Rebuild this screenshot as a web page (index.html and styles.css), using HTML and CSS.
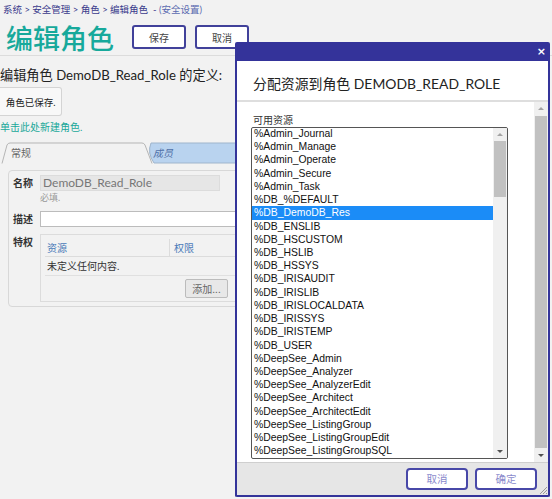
FILE: index.html
```html
<!DOCTYPE html>
<html>
<head>
<meta charset="utf-8">
<link rel="stylesheet" href="styles.css">
</head>
<body>
<div class="page">
  <div class="crumbs">系统 &gt; 安全管理 &gt; 角色 &gt; 编辑角色 &nbsp;- <span class="crumb-light">(安全设置)</span></div>
  <div class="titlebar">
    <h1 class="title">编辑角色</h1>
    <button class="hbtn">保存</button>
    <button class="hbtn">取消</button>
  </div>
  <div class="def">编辑角色 DemoDB_Read_Role 的定义:</div>
  <div class="msg">角色已保存.</div>
  <div class="link">单击此处新建角色.</div>
  <div class="tabs">
    <svg class="tabs-bg" width="240" height="22" viewBox="0 0 240 22">
      <path d="M150,1 L240,1 L240,21 L153,21 Q146,11 150,1 Z" fill="#b9d3ef" stroke="#9fb5cc" stroke-width="1"/>
      <path d="M1,21.5 L6,3 Q7,1 9,1 L141,1 Q143,1 144,3 L151,21.5" fill="#f2f2f2" stroke="#b5b5b5" stroke-width="1"/>
    </svg>
    <span class="tab t1">常规</span>
    <span class="tab t2">成员</span>
  </div>
  <div class="panel">
    <div class="frow">
      <div class="lbl">名称</div>
      <div class="fcol">
        <div class="inp ro">DemoDB_Read_Role</div>
        <div class="hint">必填.</div>
      </div>
    </div>
    <div class="frow r2">
      <div class="lbl">描述</div>
      <div class="fcol"><div class="inp wide"></div></div>
    </div>
    <div class="frow r3">
      <div class="lbl">特权</div>
      <div class="fcol">
        <div class="tbl">
          <div class="thead"><span class="th c1">资源</span><span class="th c2">权限</span></div>
          <div class="trow">未定义任何内容.</div>
          <div class="tbtn"><button class="addbtn">添加...</button></div>
        </div>
      </div>
    </div>
  </div>
</div>

<div class="dialog">
  <div class="dtitlebar"><span class="close">×</span></div>
  <div class="dhead">分配资源到角色 DEMODB_READ_ROLE</div>
  <div class="dbody">
    <div class="dcontent">
      <div class="dlabel">可用资源</div>
      <div class="listbox">
        <div class="items">
          <div class="item">%Admin_Journal</div>
          <div class="item">%Admin_Manage</div>
          <div class="item">%Admin_Operate</div>
          <div class="item">%Admin_Secure</div>
          <div class="item">%Admin_Task</div>
          <div class="item">%DB_%DEFAULT</div>
          <div class="item sel">%DB_DemoDB_Res</div>
          <div class="item">%DB_ENSLIB</div>
          <div class="item">%DB_HSCUSTOM</div>
          <div class="item">%DB_HSLIB</div>
          <div class="item">%DB_HSSYS</div>
          <div class="item">%DB_IRISAUDIT</div>
          <div class="item">%DB_IRISLIB</div>
          <div class="item">%DB_IRISLOCALDATA</div>
          <div class="item">%DB_IRISSYS</div>
          <div class="item">%DB_IRISTEMP</div>
          <div class="item">%DB_USER</div>
          <div class="item">%DeepSee_Admin</div>
          <div class="item">%DeepSee_Analyzer</div>
          <div class="item">%DeepSee_AnalyzerEdit</div>
          <div class="item">%DeepSee_Architect</div>
          <div class="item">%DeepSee_ArchitectEdit</div>
          <div class="item">%DeepSee_ListingGroup</div>
          <div class="item">%DeepSee_ListingGroupEdit</div>
          <div class="item">%DeepSee_ListingGroupSQL</div>
        </div>
        <div class="sbar inner">
          <div class="arr up"></div>
          <div class="track"><div class="thumb ithumb"></div></div>
          <div class="arr down"></div>
        </div>
      </div>
    </div>
    <div class="sbar outer">
      <div class="arr up"></div>
      <div class="track"><div class="thumb othumb"></div></div>
      <div class="arr down"></div>
    </div>
  </div>
  <div class="dfoot">
    <button class="fbtn">取消</button>
    <button class="fbtn">确定</button>
  </div>
  <svg class="grip" width="10" height="10" viewBox="0 0 10 10">
    <path d="M9,2 L2,9 M9,5 L5,9 M9,8 L8,9" stroke="#999" stroke-width="1"/>
  </svg>
</div>
</body>
</html>
```
FILE: styles.css
```css
* { box-sizing: border-box; }
html, body { margin: 0; padding: 0; }
body {
  width: 552px;
  height: 499px;
  overflow: hidden;
  background: #f2f2f2;
  font-family: "Lato", "Noto Sans CJK SC", sans-serif;
  color: #333;
  position: relative;
}
.page { width: 552px; }
.crumbs {
  height: 20px;
  line-height: 20px;
  padding-left: 3px;
  font-size: 9.5px;
  color: #3a3a8c;
}
.crumb-light { color: #5a6ab0; }
.titlebar {
  height: 36px;
  display: flex;
  align-items: center;
  padding-left: 6px;
  border-bottom: 1px solid #dcdcdc;
}
.title {
  margin: 0 18px 0 0;
  font-size: 27px;
  font-weight: 500;
  line-height: 1;
  color: #17a99b;
  font-family: "Noto Sans CJK SC", sans-serif;
}
.hbtn {
  width: 54px;
  height: 24px;
  margin-right: 9px;
  margin-top: -1px;
  background: #fff;
  border: 2px solid #41419a;
  border-radius: 3px;
  font-family: "Noto Sans CJK SC", sans-serif;
  font-size: 10px;
  color: #444;
  padding: 0;
}
.def {
  margin-top: 10px;
  font-size: 13.2px;
  line-height: 18px;
  color: #222;
}
.msg {
  margin-top: 3px;
  width: 62px;
  height: 29px;
  background: #f8f8f8;
  border: 1px solid #d4d4d4;
  border-left: none;
  border-radius: 0 3px 3px 0;
  display: flex;
  align-items: center;
  justify-content: center;
  font-size: 9.5px;
  color: #222;
}
.link {
  margin-top: 4px;
  font-size: 10px;
  line-height: 14px;
  color: #1aa89a;
}
.tabs {
  position: relative;
  margin-top: 8px;
  height: 22px;
  display: flex;
  align-items: center;
  font-size: 10px;
}
.tabs-bg { position: absolute; left: 1px; top: 0; }
.tab { position: relative; line-height: 22px; }
.t1 { margin-left: 11px; color: #666; }
.t2 { margin-left: 122px; color: #5070a8; font-style: italic; }
.panel {
  margin-top: 6px;
  margin-left: 8px;
  width: 260px;
  height: 137px;
  border: 1px solid #d8d8d8;
  border-radius: 4px;
  padding: 4px 0 0 4px;
}
.frow { display: flex; }
.lbl {
  flex: none;
  width: 27px;
  font-size: 10px;
  font-weight: 700;
  line-height: 16px;
  color: #333;
  white-space: nowrap;
}
.fcol { flex: none; width: 240px; }
.inp {
  height: 16px;
  border: 1px solid #dcdcdc;
  font-size: 12px;
  line-height: 14px;
  padding-left: 2px;
  color: #777;
}
.ro { width: 180px; background: #e6e6e6; }
.wide { width: 240px; background: #fff; border-color: #bcbcbc; }
.hint {
  margin-top: 1px;
  font-size: 9px;
  line-height: 12px;
  color: #999;
}
.r2 { margin-top: 7px; }
.r3 { margin-top: 7px; }
.tbl {
  width: 240px;
  height: 68px;
  border: 1px solid #dcdcdc;
  padding: 4px 0 0 4px;
}
.thead {
  display: flex;
  height: 18px;
  border-bottom: 1px solid #dcdcdc;
  font-size: 10px;
  line-height: 18px;
  color: #4a7ab8;
}
.th.c1 { width: 125px; padding-left: 2px; border-right: 1px solid #dcdcdc; }
.th.c2 { padding-left: 4px; }
.trow {
  height: 19px;
  line-height: 19px;
  border-bottom: 1px solid #e0e0e0;
  font-size: 10px;
  padding-left: 2px;
  color: #333;
}
.tbtn { padding-left: 140px; padding-top: 1px; }
.addbtn {
  width: 43px;
  height: 19px;
  padding: 0;
  background: #e8e8e8;
  border: 1px solid #bcbcbc;
  border-radius: 2px;
  font-family: "Noto Sans CJK SC", sans-serif;
  font-size: 10px;
  color: #666;
}

/* dialog */
.dialog {
  position: absolute;
  left: 235px;
  top: 42px;
  width: 315px;
  height: 455px;
  border: 2px solid #34349a;
  border-top: none;
  border-radius: 2px;
  background: #fff;
  display: flex;
  flex-direction: column;
}
.dtitlebar {
  height: 19px;
  background: #34339a;
  display: flex;
  justify-content: flex-end;
  align-items: center;
  padding-right: 2px;
}
.close {
  color: #fff;
  font-family: "DejaVu Sans", sans-serif;
  font-weight: 700;
  font-size: 11px;
  line-height: 1;
}
.dhead {
  height: 41px;
  border-bottom: 2px solid #dedede;
  padding: 14px 0 0 16px;
  font-size: 13.9px;
  line-height: 18px;
  color: #222;
}
.dbody {
  flex: 1;
  display: flex;
  background: #fff;
}
.dcontent { flex: 1; padding: 11px 0 0 14px; }
.dlabel {
  font-size: 10px;
  line-height: 14px;
  color: #333;
  padding-left: 2px;
}
.listbox {
  width: 257px;
  height: 332px;
  border: 1px solid #555;
  border-radius: 2px;
  display: flex;
  overflow: hidden;
  background: #fff;
}
.items { flex: 1; margin-top: -1px; overflow: hidden; }
.item {
  height: 13.22px;
  line-height: 13.22px;
  padding-left: 2px;
  font-family: "Liberation Sans", Arial, sans-serif;
  font-size: 10.4px;
  color: #111;
  white-space: nowrap;
}
.item.sel { background: #1b8cf7; color: #fff; }
.sbar {
  width: 14px;
  display: flex;
  flex-direction: column;
  background: #f0f0f0;
}
.sbar .track { flex: 1; position: relative; }
.arr { height: 13px; position: relative; }
.arr::after {
  content: "";
  position: absolute;
  left: 4px;
  width: 0; height: 0;
  border-left: 3px solid transparent;
  border-right: 3px solid transparent;
}
.arr.up::after { top: 5px; border-bottom: 3px solid #a3a3a3; }
.arr.down::after { top: 5px; border-top: 3px solid #505050; }
.thumb { background: #c1c1c1; margin: 0 1px; }
.ithumb { height: 56px; }
.outer .track { display: flex; }
.othumb { flex: 1; margin: 1px; }
.dfoot {
  height: 33px;
  background: #e6e6e6;
  border-top: 1px solid #cfcfcf;
  display: flex;
  justify-content: flex-end;
  align-items: center;
  gap: 7px;
  padding-right: 11px;
  padding-bottom: 1px;
}
.fbtn {
  width: 62px;
  height: 22px;
  padding: 0;
  background: #fff;
  border: 2px solid #4848a8;
  border-radius: 4px;
  font-family: "Noto Sans CJK SC", sans-serif;
  font-size: 10.5px;
  color: #8a8acc;
}
.grip { position: absolute; right: 0; bottom: 0; }
```
